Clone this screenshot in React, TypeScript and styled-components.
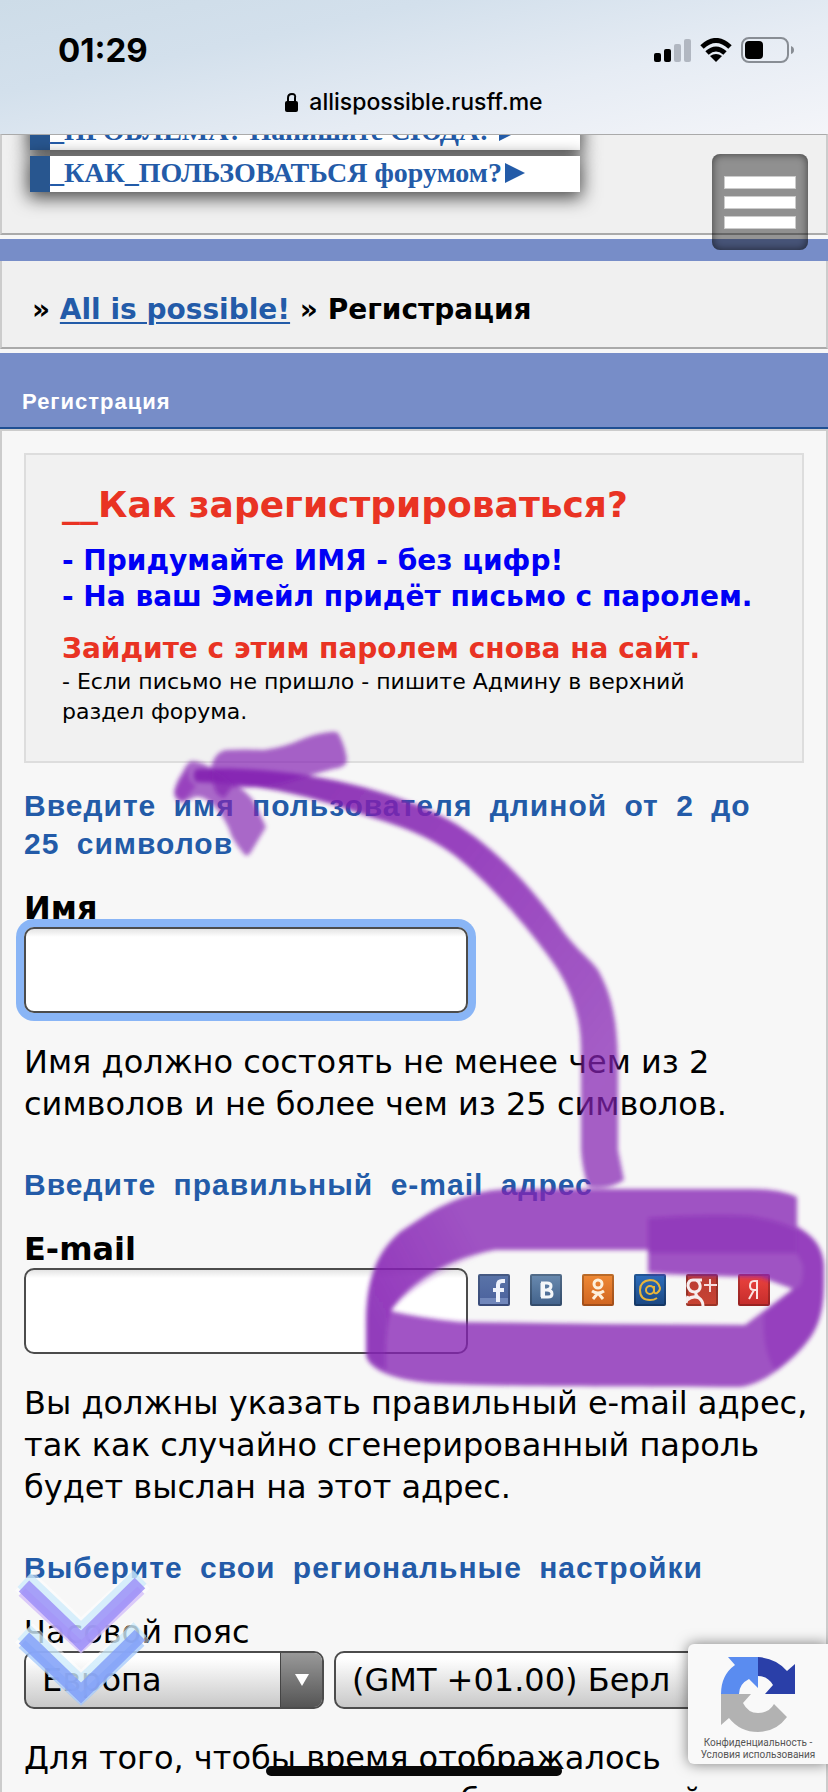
import React from "react";
import styled, { createGlobalStyle } from "styled-components";

const verdana = `Verdana, "DejaVu Sans", sans-serif`;
const helvetica = `"Liberation Sans", Arial, sans-serif`;
const system = `Inter, "Liberation Sans", sans-serif`;

const GlobalStyle = createGlobalStyle`
  * { box-sizing: border-box; }
  body { margin: 0; background: #f7f7f7; color: #000; font-family: ${verdana}; }
`;

const Screen = styled.div`
  position: relative;
  height: 100vh;
  overflow: hidden;
`;

/* ---------- Browser chrome ---------- */

const Chrome = styled.header`
  height: 134px;
  background: linear-gradient(168deg, #cddce8 0%, #d3e0ec 30%, #e6ecf4 65%, #f4f5f9 100%);
  font-family: ${system};
  display: flex;
  flex-direction: column;
`;

const StatusBar = styled.div`
  display: flex;
  justify-content: space-between;
  align-items: center;
  padding: 30px 34px 0 58px;
  height: 70px;
`;

const Clock = styled.time`
  font-size: 33px;
  font-weight: 700;
  line-height: 40px;
`;

const StatusIcons = styled.div`
  display: flex;
  align-items: center;
  gap: 9px;
`;

const AddressBar = styled.div`
  display: flex;
  justify-content: center;
  align-items: center;
  gap: 11px;
  height: 64px;
  font-size: 23px;
  font-weight: 500;
`;

/* ---------- Forum header ---------- */

const Announcement = styled.section`
  display: flex;
  flex-direction: column;
  justify-content: flex-end;
  gap: 6px;
  height: 101px;
  padding: 0 28px 41px;
  overflow: hidden;
  background: #f0f0f0;
  border: 2px solid #ccc;
  border-top: 1px solid #aaa;
  border-bottom-color: #aaa;
`;

const BannerLink = styled.a`
  display: flex;
  align-items: center;
  gap: 3px;
  flex: none;
  width: 550px;
  max-width: 100%;
  height: 36px;
  padding-bottom: 2px;
  border-left: 20px solid #28568f;
  background: #fff;
  box-shadow: 0 4px 18px 2px rgba(0, 0, 0, 0.7);
  color: #235ba8;
  font: 700 28px/34px "Liberation Serif", "Times New Roman", serif;
  text-decoration: none;
  white-space: pre;
`;

const MenuButton = styled.button`
  position: absolute;
  top: 154px;
  right: 20px;
  width: 96px;
  height: 96px;
  padding: 0 12px;
  border: 0;
  border-radius: 8px;
  background: rgba(0, 0, 0, 0.4);
  box-shadow: inset 0 0 8px rgba(0, 0, 0, 0.6);
  display: flex;
  flex-direction: column;
  align-items: stretch;
  justify-content: center;
  gap: 7px;
`;

const MenuBar = styled.span`
  height: 13px;
  background: #fff;
  border: 1px solid #ccc;
`;

const Stripe = styled.div`
  height: 22px;
  margin-top: 4px;
  background: #778dc8;
`;

const Breadcrumbs = styled.nav`
  padding: 32px 30px 20px;
  background: #f0f0f0;
  border: 2px solid #ccc;
  border-top: 0;
  border-bottom-color: #aaa;
  font-size: 28px;
  font-weight: 700;
  line-height: 34px;

  a { color: #235ba8; text-decoration-thickness: 2px; text-underline-offset: 3px; }
`;

const TitleBar = styled.h1`
  margin: 4px 0 0;
  padding: 34px 22px 10px;
  background: #778dc8;
  border-bottom: 2px solid #1f4f93;
  color: #fff;
  font: 700 22px/30px ${helvetica};
  letter-spacing: 1px;
`;

/* ---------- Registration form ---------- */

const Main = styled.main`
  padding: 22px 22px 0;
  border: 2px solid #ccc;
  border-bottom: 0;
`;

const Notice = styled.section`
  padding: 28px 36px 34px;
  background: #f1f1f1;
  border: 2px solid #ddd;
`;

const NoticeTitle = styled.h2`
  margin: 0 0 16px;
  color: #e93323;
  font-size: 36px;
  line-height: 44px;
`;

const NoticeLine = styled.p<{ $color: string }>`
  margin: 0;
  color: ${(p) => p.$color};
  font-size: 28px;
  font-weight: 700;
  line-height: 36px;
  white-space: nowrap;
`;

const NoticeSmall = styled.p`
  margin: 0;
  font-size: 22px;
  line-height: 30px;
`;

const Spacer = styled.div`
  height: 16px;
`;

const Legend = styled.h3`
  margin: 0;
  color: #235ba8;
  font: 700 30px/38px ${helvetica};
  letter-spacing: 1px;
  word-spacing: 8px;
`;

const Group = styled.section<{ $first?: boolean }>`
  padding-top: ${(p) => (p.$first ? 24 : 41)}px;
`;

const Label = styled.label<{ $bold?: boolean }>`
  display: block;
  margin-top: 26px;
  font-size: 32px;
  font-weight: ${(p) => (p.$bold ? 700 : 400)};
  line-height: 38px;
`;

const FieldRow = styled.div`
  display: flex;
  align-items: flex-start;
  gap: 10px;
`;

const TextInput = styled.input<{ $active?: boolean }>`
  width: 444px;
  height: 86px;
  padding: 0 16px;
  border: 2px solid #4c4c4c;
  border-radius: 10px;
  background: linear-gradient(#e4e4e4, #fff 8px);
  box-shadow: ${(p) => (p.$active ? "0 0 0 8px #89b5f6" : "none")};
  font: 32px ${verdana};
  outline: none;
`;

const Help = styled.p`
  margin: 28px -16px 0 0;
  font-size: 32px;
  line-height: 42px;
`;

const Socials = styled.div`
  display: flex;
  gap: 20px;
  padding-top: 6px;
`;

const SocialLink = styled.a`
  display: block;
  width: 32px;
  height: 32px;
`;

const SelectBox = styled.div<{ $wide?: boolean }>`
  position: relative;
  flex: ${(p) => (p.$wide ? "1 1 0" : "0 0 300px")};
`;

const Select = styled.select`
  appearance: none;
  width: 100%;
  height: 58px;
  padding: 0 44px 0 16px;
  border: 2px solid #4c4c4c;
  border-radius: 10px;
  background: linear-gradient(#fff 10%, #c8c8c8);
  color: #000;
  font: 32px ${verdana};
`;

const SelectArrow = styled.span`
  position: absolute;
  top: 2px;
  right: 2px;
  bottom: 2px;
  width: 42px;
  border-left: 1px solid #444;
  border-radius: 0 8px 8px 0;
  background: linear-gradient(#999, #555);
  display: flex;
  align-items: center;
  justify-content: center;
  pointer-events: none;
`;

/* ---------- Floating layers ---------- */

const Markup = styled.svg`
  position: absolute;
  top: 0;
  left: 0;
  width: 828px;
  height: 1792px;
  pointer-events: none;
`;

const ScrollDown = styled.a`
  position: absolute;
  left: 14px;
  bottom: 78px;
  line-height: 0;
`;

const Captcha = styled.aside`
  position: absolute;
  right: 0;
  bottom: 28px;
  width: 140px;
  height: 120px;
  padding-top: 13px;
  border-radius: 6px 0 0 6px;
  background: #f9f9f9;
  box-shadow: 0 0 14px rgba(0, 0, 0, 0.5);
  display: flex;
  flex-direction: column;
  align-items: center;
  gap: 5px;
  color: #555;
  font: 10px/12px Roboto, sans-serif;
  text-align: center;
  white-space: nowrap;

  a { color: inherit; text-decoration: none; }
`;

const HomeIndicator = styled.div`
  position: absolute;
  left: 50%;
  bottom: 16px;
  width: 296px;
  height: 10px;
  margin-left: -148px;
  border-radius: 5px;
  background: #080808;
`;

const Banner = ({ children }: { children: React.ReactNode }) => (
  <BannerLink href="#help">
    {children}
    <svg width="20" height="20" viewBox="0 0 20 20" aria-hidden="true">
      <path d="M0 0L20 10L0 20Z" fill="#235ba8" />
    </svg>
  </BannerLink>
);

type SocialProps = { name: string; top: string; bottom: string; children: React.ReactNode };

const Social = ({ name, top, bottom, children }: SocialProps) => (
  <SocialLink href={`#${name}`} aria-label={name}>
    <svg width="32" height="32" viewBox="0 0 32 32">
      <defs>
        <linearGradient id={`bg-${name}`} x2="0" y2="1">
          <stop stopColor={top} />
          <stop offset="1" stopColor={bottom} />
        </linearGradient>
      </defs>
      <rect width="32" height="32" rx="2" fill={`url(#bg-${name})`} />
      <rect x="1" y="1" width="30" height="30" rx="1" fill="none" stroke="#000" strokeOpacity=".22" strokeWidth="2" />
      {children}
    </svg>
  </SocialLink>
);

const SocialIcons = () => (
  <Socials>
    <Social name="facebook" top="#5a74a8" bottom="#4a609c">
      <path d="M2 24H30V30H2Z" fill="#7187bb" />
      <path d="M27 7H24Q20 7 20 11V28M15 16H26" fill="none" stroke="#eef2fb" strokeWidth="4" />
    </Social>
    <Social name="vk" top="#6a8bb0" bottom="#41618a">
      <path d="M12 9V23M11 9H17Q21 9 21 12Q21 15 17 16H12M17 16Q22 16 22 20Q22 23 18 23H11" fill="none" stroke="#f4f7fa" strokeWidth="3" />
      <path d="M13 9V23" stroke="#f4f7fa" strokeWidth="4" />
    </Social>
    <Social name="odnoklassniki" top="#f08a35" bottom="#cf6420">
      <circle cx="16" cy="10" r="4" fill="none" stroke="#fdf0dc" strokeWidth="3" />
      <path d="M10 17Q16 21 22 17M16 19L11 25M16 19L21 25" fill="none" stroke="#fdf0dc" strokeWidth="3" />
    </Social>
    <Social name="mailru" top="#2c6fbe" bottom="#1b4680">
      <circle cx="16" cy="16" r="4" fill="none" stroke="#e8b53a" strokeWidth="2" />
      <path d="M20 12V17Q20 20 23 19Q26 17 26 14Q24 6 16 6Q6 7 6 16Q6 26 16 26Q20 26 23 24" fill="none" stroke="#e8b53a" strokeWidth="2" />
    </Social>
    <Social name="google" top="#b83c34" bottom="#c84332">
      <path d="M16 6H7Q2 6 2 12Q3 18 9 18Q15 17 14 11Q13 7 10 6M10 18Q9 21 13 24Q17 27 17 32M1 26Q7 21 13 24M2 22L0 29" fill="none" stroke="#f7eeee" strokeWidth="3" />
      <path d="M24 5V18M18 11H31" stroke="#f7dddd" strokeWidth="2" />
    </Social>
    <Social name="yandex" top="#ee443f" bottom="#c32c2b">
      <path d="M19 25V7H16Q12 7 12 12Q12 16 16 16H19M16 16L11 25" fill="none" stroke="#fbe4e2" strokeWidth="2" />
    </Social>
  </Socials>
);

const Chevron = ({ y, main, under }: { y: number; main: string; under: string }) => (
  <g fill="none" transform={`translate(0 ${y})`}>
    <path d="M10 13L67 67L127 11" stroke="#fff" strokeWidth="26" opacity=".5" />
    <path d="M10 12L67 66L126 9" stroke="#bfe6fb" strokeWidth="19" opacity=".6" />
    <path d="M8 24L67 79L127 22" stroke={under} strokeWidth="10" opacity=".7" />
    <path d="M10 18L67 73L126 15" stroke={main} strokeWidth="15" opacity=".8" />
  </g>
);

const PurpleMarker = () => (
  <Markup viewBox="0 0 828 1792" aria-hidden="true">
    <defs>
      <filter id="soft" x="-10%" y="-10%" width="120%" height="120%">
        <feGaussianBlur stdDeviation="2" />
      </filter>
      <linearGradient id="shaft" gradientUnits="userSpaceOnUse" x1="200" y1="770" x2="600" y2="1080">
        <stop stopColor="#7a14a8" stopOpacity=".85" />
        <stop offset=".5" stopColor="#8522b3" stopOpacity=".84" />
        <stop offset="1" stopColor="#8522b3" stopOpacity=".72" />
      </linearGradient>
      <linearGradient id="leftBend" gradientUnits="userSpaceOnUse" x1="366" y1="1300" x2="480" y2="1240">
        <stop stopColor="#8522b3" stopOpacity=".5" />
        <stop offset="1" stopColor="#8522b3" stopOpacity="0" />
      </linearGradient>
    </defs>
    <g fill="#8522b3" filter="url(#soft)">
      <path
        fill="url(#shaft)"
        d="M588 1187Q582 1168 581 1150V1050C581 1015 570 990 558 970C545 950 510 905 475 873C440 838 400 826 370 817C310 795 260 784 196 782Q191 775 196 769C300 764 400 792 449 820C490 843 525 880 555 920C575 950 590 958 598 970C612 995 617 1020 618 1060V1150L624 1180Q610 1190 588 1187Z"
      />
      <path
        fillOpacity=".7"
        d="M211 767Q215 752 226 750Q245 749 264 750Q285 747 300 740Q317 733 330 732Q335 731 338 733Q345 745 347 760Q346 768 333 769Q310 775 285 783Q260 789 232 787L224 798Q218 795 216 792Q211 780 211 767Z"
      />
      <path
        fillOpacity=".68"
        d="M193 761Q202 762 211 768Q222 774 232 783Q245 790 253 800L266 827L251 852Q248 857 245 855Q240 850 232 837Q225 815 210 802Q202 796 195 797L182 803Q174 800 174 792Q176 781 182 773Q188 760 193 761Z"
      />
      <path fillOpacity=".5" d="M190 765Q185 780 196 786L184 800Q173 797 175 790Z" />
      <path
        fillOpacity=".77"
        fillRule="evenodd"
        d="M797 1197Q780 1189 750 1189H510C460 1190 430 1212 400 1232C367 1260 366 1300 366 1330V1355C368 1370 395 1380 430 1383C500 1387 600 1386 740 1387C765 1385 800 1355 812 1335C825 1315 824 1290 824 1265C822 1240 805 1232 797 1226ZM391 1311C405 1288 440 1260 495 1250H648V1273Q700 1276 760 1277L793 1289L745 1325L600 1324L460 1322Q420 1318 391 1311Z"
      />
      <path fillOpacity=".5" d="M648 1218Q700 1214 750 1216Q780 1221 797 1230V1253H648Z" />
      <path fillOpacity=".35" d="M797 1228Q822 1238 824 1265C824 1290 825 1315 812 1335Q790 1362 775 1370Q762 1350 764 1314L793 1289Q804 1290 803 1265L797 1253Z" />
      <path
        fill="url(#leftBend)"
        d="M510 1189C460 1190 430 1212 400 1232C367 1260 366 1300 366 1330V1355Q370 1364 386 1370Q384 1330 392 1309Q415 1280 495 1250Z"
      />
    </g>
  </Markup>
);

const CaptchaLogo = () => (
  <svg width="74" height="75" viewBox="0 0 74 75" aria-hidden="true">
    <path d="M7 0H37V31L28 22Q18 27 18 37H0Q0 18 14 8Z" fill="#5a8cf0" />
    <path d="M37 0Q55 1 66 14L74 7V37H44L52 28Q47 19 37 19Z" fill="#2a3fa8" />
    <path d="M0 37H30L22 46Q27 56 37 56Q48 56 53 47L66 60Q55 75 37 75Q19 75 8 61L0 68Z" fill="#b2b2b2" />
  </svg>
);

export default function App() {
  return (
    <Screen>
      <GlobalStyle />
      <Chrome>
        <StatusBar>
          <Clock>01:29</Clock>
          <StatusIcons>
            <svg width="37" height="23" viewBox="0 0 37 23" aria-hidden="true">
              <rect y="14" width="7" height="9" rx="2" />
              <rect x="10" y="10" width="7" height="13" rx="2" />
              <rect x="20" y="5" width="7" height="18" rx="2" fill="#b1b7c1" />
              <rect x="30" width="7" height="23" rx="2" fill="#b1b7c1" />
            </svg>
            <svg width="32" height="24" viewBox="0 0 32 24" aria-hidden="true">
              <path d="M2 9Q16 -4 30 9M7 15Q16 7 25 15" fill="none" stroke="#000" strokeWidth="5" />
              <path d="M10 18Q16 14 22 18L16 24Z" />
            </svg>
            <svg width="53" height="26" viewBox="0 0 53 26" aria-hidden="true">
              <rect x="1" y="1" width="46" height="24" rx="7" fill="none" stroke="#888d94" strokeWidth="2" />
              <rect x="4" y="4" width="18" height="18" rx="4" />
              <path d="M50 9Q53 10 53 13T50 17Z" fill="#888d94" />
            </svg>
          </StatusIcons>
        </StatusBar>
        <AddressBar>
          <svg width="13" height="19" viewBox="0 0 13 19" aria-hidden="true">
            <path d="M3 9V5Q3 1 7 1T10 5V9" fill="none" stroke="#000" strokeWidth="2" />
            <rect y="8" width="13" height="11" rx="2" />
          </svg>
          <span>allispossible.rusff.me</span>
        </AddressBar>
      </Chrome>

      <Announcement>
        <Banner>{"_ПРОБЛЕМА? Напишите СЮДА! "}</Banner>
        <Banner>_КАК_ПОЛЬЗОВАТЬСЯ форумом?</Banner>
      </Announcement>
      <Stripe />
      <Breadcrumbs>
        » <a href="#home">All is possible!</a> » Регистрация
      </Breadcrumbs>
      <TitleBar>Регистрация</TitleBar>

      <Main>
        <Notice>
          <NoticeTitle>__Как зарегистрироваться?</NoticeTitle>
          <NoticeLine $color="#0000f5">- Придумайте ИМЯ - без цифр!</NoticeLine>
          <NoticeLine $color="#0000f5">- На ваш Эмейл придёт письмо с паролем.</NoticeLine>
          <Spacer />
          <NoticeLine $color="#e93323">Зайдите с этим паролем снова на сайт.</NoticeLine>
          <NoticeSmall>- Если письмо не пришло - пишите Админу в верхний раздел форума.</NoticeSmall>
        </Notice>

        <Group $first>
          <Legend>Введите имя пользователя длиной от 2 до 25&nbsp;символов</Legend>
          <Label $bold htmlFor="username">Имя</Label>
          <FieldRow>
            <TextInput id="username" $active />
          </FieldRow>
          <Help>Имя должно состоять не менее чем из 2 символов и не более чем из 25 символов.</Help>
        </Group>

        <Group>
          <Legend>Введите правильный e-mail адрес</Legend>
          <Label $bold htmlFor="email">E-mail</Label>
          <FieldRow>
            <TextInput id="email" type="email" />
            <SocialIcons />
          </FieldRow>
          <Help>Вы должны указать правильный e-mail адрес, так как случайно сгенерированный пароль будет выслан на этот адрес.</Help>
        </Group>

        <Group>
          <Legend>Выберите свои региональные настройки</Legend>
          <Label htmlFor="region">Часовой пояс</Label>
          <FieldRow>
            <SelectBox>
              <Select id="region" defaultValue="eu">
                <option value="eu">Европа</option>
              </Select>
              <SelectArrow>
                <svg width="14" height="12" viewBox="0 0 14 12" aria-hidden="true">
                  <path d="M0 0H14L7 12Z" fill="#fff" />
                </svg>
              </SelectArrow>
            </SelectBox>
            <SelectBox $wide>
              <Select aria-label="Часовой пояс" defaultValue="gmt1">
                <option value="gmt1">(GMT +01.00) Берл</option>
              </Select>
            </SelectBox>
          </FieldRow>
          <Help>Для того, чтобы время отображалось правильно вы должны выбрать часовой</Help>
        </Group>
      </Main>

      <MenuButton aria-label="Меню">
        <MenuBar />
        <MenuBar />
        <MenuBar />
      </MenuButton>
      <PurpleMarker />
      <ScrollDown href="#bottom" aria-label="Вниз">
        <svg width="136" height="146" viewBox="0 0 136 146">
          <Chevron y={0} main="#9a8cf8" under="#cdb5f8" />
          <Chevron y={52} main="#7f9cf8" under="#9cc4fb" />
        </svg>
      </ScrollDown>
      <Captcha>
        <CaptchaLogo />
        <div>
          <a href="#privacy">Конфиденциальность</a> -<br />
          <a href="#terms">Условия использования</a>
        </div>
      </Captcha>
      <HomeIndicator />
    </Screen>
  );
}
